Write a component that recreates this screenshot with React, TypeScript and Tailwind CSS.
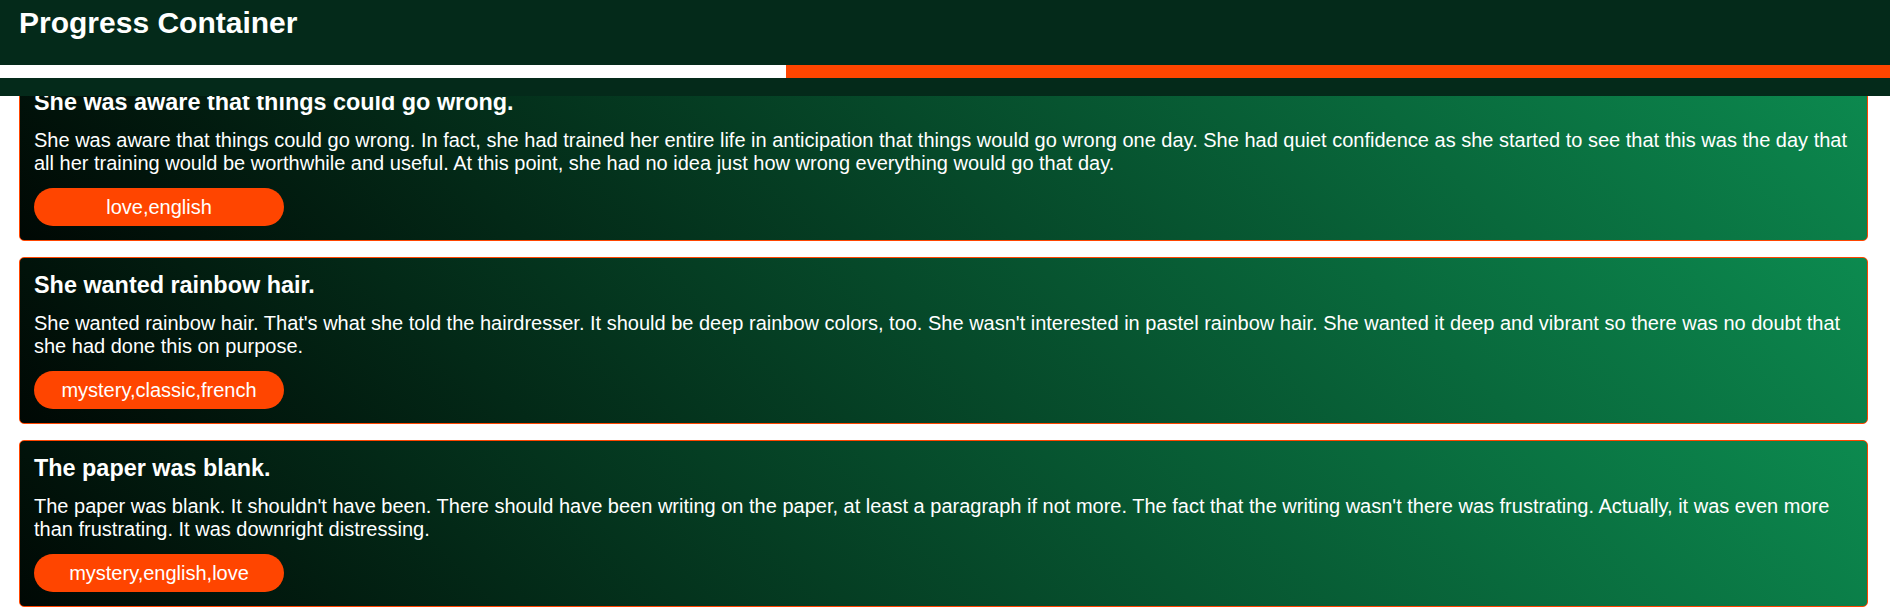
import React from "react";

type Post = {
  title: string;
  body: string;
  tags: string;
};

const posts: Post[] = [
  {
    title: "She was aware that things could go wrong.",
    body: "She was aware that things could go wrong. In fact, she had trained her entire life in anticipation that things would go wrong one day. She had quiet confidence as she started to see that this was the day that all her training would be worthwhile and useful. At this point, she had no idea just how wrong everything would go that day.",
    tags: "love,english",
  },
  {
    title: "She wanted rainbow hair.",
    body: "She wanted rainbow hair. That's what she told the hairdresser. It should be deep rainbow colors, too. She wasn't interested in pastel rainbow hair. She wanted it deep and vibrant so there was no doubt that she had done this on purpose.",
    tags: "mystery,classic,french",
  },
  {
    title: "The paper was blank.",
    body: "The paper was blank. It shouldn't have been. There should have been writing on the paper, at least a paragraph if not more. The fact that the writing wasn't there was frustrating. Actually, it was even more than frustrating. It was downright distressing.",
    tags: "mystery,english,love",
  },
];

function Card({ post }: { post: Post }) {
  return (
    <div className="border border-[#ff4500] rounded-[5px] p-[14px] bg-[linear-gradient(45deg,#000804,#0c8a4f)] text-white">
      <h3 className="text-[23.4px] leading-[27px] font-bold">{post.title}</h3>
      <p className="mt-[13px] text-[20px] leading-[23px]">{post.body}</p>
      <div className="mt-[13px] w-[250px] h-[38px] rounded-full bg-[#ff4500] flex items-center justify-center text-[20px]">
        {post.tags}
      </div>
    </div>
  );
}

export default function App() {
  return (
    <div className="relative bg-white min-h-[612px] font-['Liberation_Sans',Arial,sans-serif]">
      <header className="fixed top-0 left-0 right-0 z-10 h-[96px] bg-[#042a1a]">
        <h1 className="pt-[6px] pl-[19px] text-[30px] leading-[34px] font-bold text-white">
          Progress Container
        </h1>
        <div className="mt-[25px] h-[13px] flex bg-white">
          <div className="w-[786px] bg-white" />
          <div className="flex-1 bg-[#ff4500]" />
        </div>
      </header>

      <main className="pt-[74px] pl-[19px] pr-[22px] flex flex-col gap-4">
        {posts.map((p) => (
          <Card key={p.title} post={p} />
        ))}
      </main>
    </div>
  );
}
